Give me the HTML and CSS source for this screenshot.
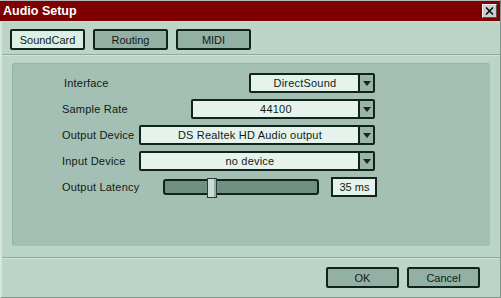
FILE: index.html
```html
<!DOCTYPE html>
<html lang="en">
<head>
    <meta charset="UTF-8">
    <title>Audio Setup</title>
    <link rel="stylesheet" href="styles.css">
</head>
<body>
    <div class="window">
        <div class="titlebar">
            <span class="title">Audio Setup</span>
            <button class="close-btn">
                <svg width="9" height="8" viewBox="0 0 9 8"><path d="M1 0.5 L8 7.5 M8 0.5 L1 7.5" stroke="#101010" stroke-width="1.6"/></svg>
            </button>
        </div>

        <div class="tabs">
            <button class="tab active">SoundCard</button>
            <button class="tab">Routing</button>
            <button class="tab">MIDI</button>
        </div>
        <div class="divider"></div>

        <div class="panel">
            <div class="form">
                <label class="label first">Interface</label>
                <div class="select w-iface">
                    <span class="value">DirectSound</span>
                    <span class="arrow"></span>
                </div>

                <label class="label">Sample Rate</label>
                <div class="select w-rate">
                    <span class="value">44100</span>
                    <span class="arrow"></span>
                </div>

                <label class="label">Output Device</label>
                <div class="select w-dev">
                    <span class="value">DS Realtek HD Audio output</span>
                    <span class="arrow"></span>
                </div>

                <label class="label">Input Device</label>
                <div class="select w-dev">
                    <span class="value">no device</span>
                    <span class="arrow"></span>
                </div>

                <label class="label">Output Latency</label>
                <div class="latency">
                    <div class="slider">
                        <div class="thumb"></div>
                    </div>
                    <div class="readout">35 ms</div>
                </div>
            </div>
        </div>

        <div class="divider bottom"></div>
        <div class="footer">
            <button class="btn">OK</button>
            <button class="btn">Cancel</button>
        </div>
    </div>
</body>
</html>
```

FILE: styles.css
```css
:root {
    --bg: #bcd5c9;
    --panel: #a4bfb4;
    --ink: #12231c;
    --field: #e6f3ec;
    --btn: #93b0a5;
}

body {
    margin: 0;
    background: var(--bg);
    font-family: 'Liberation Sans', Arial, sans-serif;
    font-size: 11px;
    color: #101a16;
}

.window {
    width: 501px;
    height: 298px;
    box-sizing: border-box;
    display: flex;
    flex-direction: column;
    background: var(--bg);
    border-left: 2px solid #d6e6de;
    border-bottom: 1px solid #7d968c;
    border-right: 1px solid #7d968c;
}

.titlebar {
    height: 20px;
    margin-left: -2px;
    border-top: 1px solid #b8b8b8;
    border-bottom: 1px solid #e4cfcf;
    background: #7e0000;
    display: flex;
    align-items: center;
    justify-content: space-between;
    padding: 0 3px 0 3px;
}

.title {
    color: #fff;
    font-family: 'Liberation Sans', Arial, sans-serif;
    font-weight: bold;
    font-size: 12.5px;
}

.close-btn {
    width: 15px;
    height: 14px;
    padding: 0;
    display: flex;
    align-items: center;
    justify-content: center;
    background: #c9cfd0;
    border: 1px solid #f2f2f2;
    border-right-color: #505050;
    border-bottom-color: #505050;
}

.tabs {
    display: flex;
    gap: 8px;
    padding: 7px 0 0 8px;
    height: 21px;
}

.tab, .btn {
    width: 75px;
    height: 21px;
    box-sizing: border-box;
    border: 2px solid var(--ink);
    border-radius: 2px;
    background: var(--btn);
    font-family: 'Liberation Sans', Arial, sans-serif;
    font-size: 11px;
    color: #101a16;
    padding: 0;
}

.tab.active {
    background: #dcefe6;
}

.divider {
    margin-top: 4px;
    height: 1px;
    background: #8ea99e;
    border-bottom: 1px solid #cfe2d9;
}

.panel {
    margin: 7px 10px 0 10px;
    height: 183px;
    background: var(--panel);
    border-radius: 3px;
    box-shadow: inset 1px 1px 0 #98b3a8;
}

.form {
    display: grid;
    grid-template-columns: auto 1fr;
    row-gap: 6px;
    align-items: center;
    padding: 10px 118px 0 50px;
}

.label {
    white-space: nowrap;
    letter-spacing: 0.2px;
}

.form .select,
.form .latency {
    justify-self: end;
}

.label.first {
    padding-left: 2px;
}

.select {
    height: 20px;
    box-sizing: border-box;
    display: flex;
    border: 2px solid var(--ink);
    border-radius: 2px;
    background: var(--field);
}

.w-iface { width: 126px; }
.w-rate { width: 184px; }
.w-dev { width: 236px; }

.select .value {
    flex: 1;
    text-align: center;
    line-height: 16px;
    white-space: nowrap;
    letter-spacing: 0.2px;
}

.arrow {
    width: 13px;
    border-left: 2px solid var(--ink);
    background: #9ab4aa;
    display: flex;
    align-items: center;
    justify-content: center;
}

.arrow::after {
    content: '';
    border-left: 4px solid transparent;
    border-right: 4px solid transparent;
    border-top: 5px solid #1a2722;
}

.latency {
    display: flex;
    align-items: center;
    gap: 12px;
    margin-right: -2px;
}

.slider {
    position: relative;
    width: 156px;
    height: 16px;
    box-sizing: border-box;
    border: 2px solid var(--ink);
    border-radius: 3px;
    background: #6f9083;
}

.thumb {
    position: absolute;
    left: 42px;
    top: -3px;
    width: 8px;
    height: 18px;
    background: #c9ddd4;
    border: 1px solid #2a3c35;
    box-shadow: inset -2px 0 0 #93ada3;
}

.readout {
    width: 46px;
    height: 20px;
    box-sizing: border-box;
    border: 2px solid var(--ink);
    background: var(--field);
    text-align: center;
    line-height: 16px;
}

.divider.bottom {
    margin-top: 11px;
}

.footer {
    display: flex;
    justify-content: flex-end;
    gap: 8px;
    padding: 8px 20px 0 0;
}

.btn {
    width: 73px;
}
```
